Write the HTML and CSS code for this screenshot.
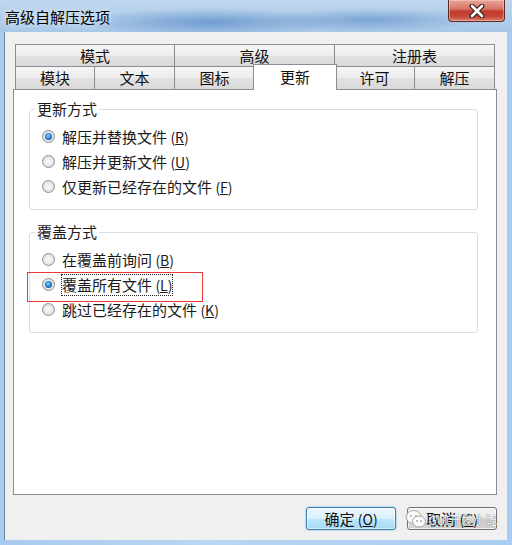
FILE: index.html
```html
<!DOCTYPE html>
<html lang="zh-CN">

<head>
    <meta charset="UTF-8">
    <meta name="viewport" content="width=device-width, initial-scale=1.0">
    <title>高级自解压选项</title>
    <link rel="stylesheet" href="styles.css">
</head>

<body>
    <div class="window">
        <div class="titlebar">
            <span class="title">高级自解压选项</span>
            <div class="close">
                <svg width="20" height="14" viewBox="0 0 20 14">
                    <path d="M5 2 L15 12 M15 2 L5 12" stroke="#3a2220" stroke-width="5" stroke-linecap="round" />
                    <path d="M5 2 L15 12 M15 2 L5 12" stroke="#ffffff" stroke-width="2.6" stroke-linecap="round" />
                </svg>
            </div>
        </div>

        <div class="client">
            <div class="tabs">
                <div class="tab-row row-top">
                    <div class="tab">模式</div>
                    <div class="tab">高级</div>
                    <div class="tab">注册表</div>
                </div>
                <div class="tab-row row-bottom">
                    <div class="tab">模块</div>
                    <div class="tab">文本</div>
                    <div class="tab">图标</div>
                    <div class="tab selected">更新</div>
                    <div class="tab">许可</div>
                    <div class="tab">解压</div>
                </div>
            </div>

            <div class="panel">
                <fieldset class="group">
                    <legend>更新方式</legend>
                    <label class="radio checked"><span class="dot"></span><span>解压并替换文件 <span class="key">(<u>R</u>)</span></span></label>
                    <label class="radio"><span class="dot"></span><span>解压并更新文件 <span class="key">(<u>U</u>)</span></span></label>
                    <label class="radio"><span class="dot"></span><span>仅更新已经存在的文件 <span class="key">(<u>F</u>)</span></span></label>
                </fieldset>

                <fieldset class="group">
                    <legend>覆盖方式</legend>
                    <label class="radio"><span class="dot"></span><span>在覆盖前询问 <span class="key">(<u>B</u>)</span></span></label>
                    <label class="radio checked"><span class="dot"></span><span class="focus">覆盖所有文件 <span class="key">(<u>L</u>)</span></span><span class="mark"></span></label>
                    <label class="radio"><span class="dot"></span><span>跳过已经存在的文件 <span class="key">(<u>K</u>)</span></span></label>
                </fieldset>
            </div>

            <div class="buttons">
                <button class="btn default">确定 <span class="key">(<u>O</u>)</span></button>
                <button class="btn">取消 <span class="key">(<u>C</u>)</span></button>
                <div class="watermark">
                    <svg width="22" height="20" viewBox="0 0 22 20">
                        <ellipse cx="8.5" cy="8" rx="7.5" ry="6.5" fill="#ffffff" stroke="#9a9a9a" stroke-width="1" />
                        <ellipse cx="14" cy="12.5" rx="6.5" ry="5.5" fill="#ffffff" stroke="#9a9a9a" stroke-width="1" />
                        <circle cx="6" cy="7" r="1" fill="#9a9a9a" />
                        <circle cx="11" cy="7" r="1" fill="#9a9a9a" />
                        <circle cx="12" cy="12" r="0.9" fill="#9a9a9a" />
                        <circle cx="16" cy="12" r="0.9" fill="#9a9a9a" />
                    </svg>
                    <span>GUI开发小记</span>
                </div>
            </div>
        </div>
    </div>
</body>

</html>
```

FILE: styles.css
```css
body {
    margin: 0;
    padding: 0;
    font-family: "Noto Sans CJK SC", "Liberation Sans", sans-serif;
    font-size: 15px;
    color: #1a1a1a;
}

.window {
    width: 512px;
    height: 545px;
    display: flex;
    flex-direction: column;
    background: linear-gradient(90deg, #a8cbee 0%, #b9d6f3 40%, #a9cdf2 100%);
    overflow: hidden;
}

/* title bar */
.titlebar {
    height: 32px;
    flex-shrink: 0;
    display: flex;
    align-items: flex-start;
    background:
        radial-gradient(ellipse 130px 14px at 210px 22px, rgba(70, 125, 190, 0.6), rgba(70, 125, 190, 0)),
        radial-gradient(ellipse 110px 12px at 370px 20px, rgba(70, 125, 190, 0.5), rgba(70, 125, 190, 0)),
        linear-gradient(180deg, #bfd6ee 0%, #a9c8e8 100%);
}

.title {
    margin-left: 5px;
    line-height: 33px;
    color: #000;
    text-shadow: 0 0 6px rgba(255, 255, 255, 0.9);
}

.close {
    margin-left: auto;
    margin-right: 7px;
    width: 57px;
    height: 22px;
    box-sizing: border-box;
    border: 1px solid #5e2a25;
    border-top: none;
    border-radius: 0 0 4px 4px;
    background: linear-gradient(180deg, #e8a596 0%, #d77a6b 40%, #c0392d 55%, #c74a3b 80%, #d9806e 100%);
    box-shadow: inset 0 0 0 1px rgba(255, 220, 210, 0.45);
    display: flex;
    align-items: center;
    justify-content: center;
}

/* client area */
.client {
    flex: 1;
    margin: 0 5px 5px 4px;
    padding: 12px 10px 0 8px;
    border-left: 1px solid #6d87a3;
    background-color: #f0f0f0;
    display: flex;
    flex-direction: column;
}

.tabs {
    margin: 0 2px;
}

.tab-row {
    display: grid;
}

.row-top {
    grid-template-columns: repeat(3, 1fr);
    height: 22px;
}

.row-bottom {
    grid-template-columns: repeat(6, 1fr);
    height: 23px;
}

.tab {
    border: 1px solid #8a8d94;
    border-bottom: none;
    margin-left: -1px;
    background: linear-gradient(180deg, #f6f6f6 0%, #ececec 50%, #e1e1e1 52%, #dadada 100%);
    text-align: center;
    line-height: 21px;
    color: #111;
}

.tab:first-child {
    margin-left: 0;
}

.tab.selected {
    position: relative;
    z-index: 1;
    margin: -2px -2px -1px -2px;
    background: #ffffff;
    line-height: 23px;
}

.panel {
    height: 406px;
    box-sizing: border-box;
    border: 1px solid #8a8d94;
    background-color: #ffffff;
    padding: 9px 18px 0 15px;
}

/* group boxes */
.group {
    margin: 0 0 12px 0;
    padding: 5px 0 10px 0;
    border: 1px solid #d5dfe5;
    border-radius: 3px;
}

.group legend {
    margin-left: 5px;
    padding: 0 2px;
    line-height: 20px;
}

.radio {
    position: relative;
    display: flex;
    align-items: center;
    height: 25px;
    padding-left: 12px;
    white-space: nowrap;
}

.dot {
    position: relative;
    width: 13px;
    height: 13px;
    box-sizing: border-box;
    margin-right: 7px;
    border: 1px solid #8f9091;
    border-radius: 50%;
    background: radial-gradient(circle at 50% 50%, #f4f4f4 30%, #dedede 70%, #d0d0d0 100%);
}

.checked .dot::after {
    content: "";
    position: absolute;
    left: 2px;
    top: 2px;
    width: 7px;
    height: 7px;
    border-radius: 50%;
    background: radial-gradient(circle at 45% 40%, #8fd6ff 0%, #2a86d6 45%, #0a3f80 100%);
}

.key {
    font-size: 14px;
}

.focus {
    outline: 1px dotted #222;
    outline-offset: 0;
    line-height: 19px;
}

/* red annotation box */
.mark {
    position: absolute;
    left: -3px;
    top: 0;
    width: 176px;
    height: 30px;
    box-sizing: border-box;
    border: 1px solid #e8393a;
}

/* buttons */
.buttons {
    position: relative;
    display: flex;
    justify-content: flex-end;
    gap: 11px;
    margin-top: 12px;
}

.btn {
    width: 90px;
    height: 23px;
    padding: 0;
    font-family: inherit;
    font-size: 15px;
    color: #111;
    border: 1px solid #707070;
    border-radius: 3px;
    background: linear-gradient(180deg, #f2f2f2 0%, #ebebeb 50%, #dddddd 51%, #cfcfcf 100%);
    box-shadow: inset 0 0 0 1px rgba(255, 255, 255, 0.7);
}

.btn.default {
    border-color: #3c7fb1;
    background: linear-gradient(180deg, #eaf6fd 0%, #d9f0fc 50%, #bee6fd 51%, #a7d9f5 100%);
    box-shadow: inset 0 0 0 1px rgba(255, 255, 255, 0.6), 0 0 2px #5aaee8;
}

.watermark {
    position: absolute;
    right: 0;
    top: 2px;
    display: flex;
    align-items: center;
    gap: 2px;
    font-size: 12px;
    color: #ffffff;
    text-shadow: 0 0 1px #555, 0 0 1px #555;
    opacity: 0.85;
    pointer-events: none;
}
```
